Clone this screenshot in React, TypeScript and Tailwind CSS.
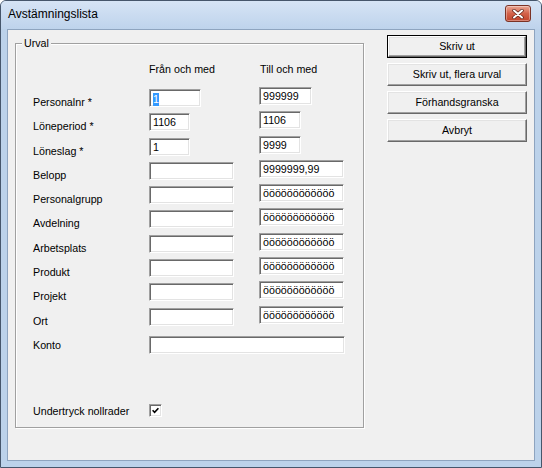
import React from 'react';

type FieldProps = {
  w: string;
  value?: string;
  selected?: boolean;
  className?: string;
};

function Field({ w, value, selected, className = '' }: FieldProps) {
  return (
    <div
      className={`${w} ${className} h-[18px] bg-white border border-t-[#a0a0a0] border-l-[#a0a0a0] border-b-white border-r-white shadow-[inset_1px_1px_0_#696969,inset_-1px_-1px_0_#e3e3e3] pl-[3px] leading-[16px] whitespace-nowrap overflow-hidden`}
    >
      {selected ? (
        <span className="inline-block h-[13px] leading-[13px] align-middle bg-[#3399ff] text-white">{value}</span>
      ) : (
        value
      )}
    </div>
  );
}

function Button({ label, primary }: { label: string; primary?: boolean }) {
  const face = (
    <div className="h-full w-full flex items-center justify-center bg-[#f0f0f0] border border-t-white border-l-white border-b-[#696969] border-r-[#696969] shadow-[inset_-1px_-1px_0_#a0a0a0,inset_1px_1px_0_#e3e3e3]">
      {label}
    </div>
  );
  return primary ? (
    <div className="h-[23px] w-[140px] border border-black">{face}</div>
  ) : (
    <div className="h-[23px] w-[140px]">{face}</div>
  );
}

const rows: { label: string; fromW: string; tillW: string; from?: string; till: string; sel?: boolean }[] = [
  { label: 'Personalnr *', fromW: 'w-[52px]', tillW: 'w-[53px]', from: '1', till: '999999', sel: true },
  { label: 'Löneperiod *', fromW: 'w-[41px]', tillW: 'w-[42px]', from: '1106', till: '1106' },
  { label: 'Löneslag *', fromW: 'w-[41px]', tillW: 'w-[42px]', from: '1', till: '9999' },
  { label: 'Belopp', fromW: 'w-[85px]', tillW: 'w-[85px]', till: '9999999,99' },
  { label: 'Personalgrupp', fromW: 'w-[85px]', tillW: 'w-[85px]', till: 'öööööööööööö' },
  { label: 'Avdelning', fromW: 'w-[85px]', tillW: 'w-[85px]', till: 'öööööööööööö' },
  { label: 'Arbetsplats', fromW: 'w-[85px]', tillW: 'w-[85px]', till: 'öööööööööööö' },
  { label: 'Produkt', fromW: 'w-[85px]', tillW: 'w-[85px]', till: 'öööööööööööö' },
  { label: 'Projekt', fromW: 'w-[85px]', tillW: 'w-[85px]', till: 'öööööööööööö' },
  { label: 'Ort', fromW: 'w-[85px]', tillW: 'w-[85px]', till: 'öööööööööööö' },
];

export default function App() {
  return (
    <div className="w-[542px] h-[468px] flex flex-col bg-[#bcd2ea] border border-[#46566b] rounded-t-[6px] overflow-hidden font-['Liberation_Sans',Arial,sans-serif] text-[10.7px] text-black">
      {/* title bar */}
      <div className="h-[28px] flex items-start bg-linear-to-b from-[#d6e4f5] to-[#bed3ec] pl-[7px] pr-[10px]">
        <span className="mt-[6px] text-[12px] leading-[15px]">Avstämningslista</span>
        <div className="ml-auto mt-[4px] h-[17px] w-[26px] rounded-[3px] border border-[#7b3326] bg-linear-to-b from-[#e9a795] via-[#d3624a] to-[#c1442c] shadow-[inset_0_0_0_1px_rgba(255,255,255,0.35)] flex items-center justify-center">
          <svg width="12" height="10" viewBox="0 0 12 10">
            <path d="M2 1.5 L10 8.5 M10 1.5 L2 8.5" stroke="#5a2218" strokeWidth="3.4" strokeLinecap="round" />
            <path d="M2 1.5 L10 8.5 M10 1.5 L2 8.5" stroke="#fff" strokeWidth="2" strokeLinecap="round" />
          </svg>
        </div>
      </div>

      {/* client area */}
      <div className="mx-[6px] mb-[6px] flex-1 border border-[#8ea4bf] bg-[#f0f0f0] flex items-start">
        {/* Urval group */}
        <div className="relative ml-[7px] mt-[13px] w-[349px] h-[385px] border border-[#a0a0a0] shadow-[inset_1px_1px_0_#fff,1px_1px_0_#fff]">
          <span className="absolute -top-[7px] left-[6px] px-[2px] leading-[13px] bg-[#f0f0f0]">Urval</span>

          <div className="pl-[17px]">
            <div className="mt-[19px] grid grid-cols-[116px_110px_auto] h-[13px] leading-[13px]">
              <span />
              <span>Från och med</span>
              <span className="pl-[1px]">Till och med</span>
            </div>

            <div className="mt-[11px]">
              {rows.map((r) => (
                <div key={r.label} className="grid grid-cols-[116px_110px_auto] items-start h-[24.3px]">
                  <span className="mt-[9px] leading-[13px]">{r.label}</span>
                  <Field w={r.fromW} value={r.from} selected={r.sel} className="mt-[2px]" />
                  <Field w={r.tillW} value={r.till} />
                </div>
              ))}
            </div>

            <div className="mt-[6px] grid grid-cols-[116px_auto] items-start">
              <span className="mt-[3px] leading-[13px]">Konto</span>
              <Field w="w-[196px]" />
            </div>

            <div className="mt-[50px] grid grid-cols-[116px_auto] items-start">
              <span className="mt-[1px] leading-[13px]">Undertryck nollrader</span>
              <div className="w-[13px] h-[13px] bg-white border border-t-[#a0a0a0] border-l-[#a0a0a0] border-b-white border-r-white shadow-[inset_1px_1px_0_#696969,inset_-1px_-1px_0_#e3e3e3] flex items-center justify-center">
                <svg width="7" height="7" viewBox="0 0 7 7">
                  <polyline points="0.6,3.2 2.6,5.3 6.4,1.2" fill="none" stroke="#000" strokeWidth="1.6" />
                </svg>
              </div>
            </div>
          </div>
        </div>

        {/* buttons */}
        <div className="ml-[23px] mt-[5px] flex flex-col gap-[5px]">
          <Button label="Skriv ut" primary />
          <Button label="Skriv ut, flera urval" />
          <Button label="Förhandsgranska" />
          <Button label="Avbryt" />
        </div>
      </div>
    </div>
  );
}
